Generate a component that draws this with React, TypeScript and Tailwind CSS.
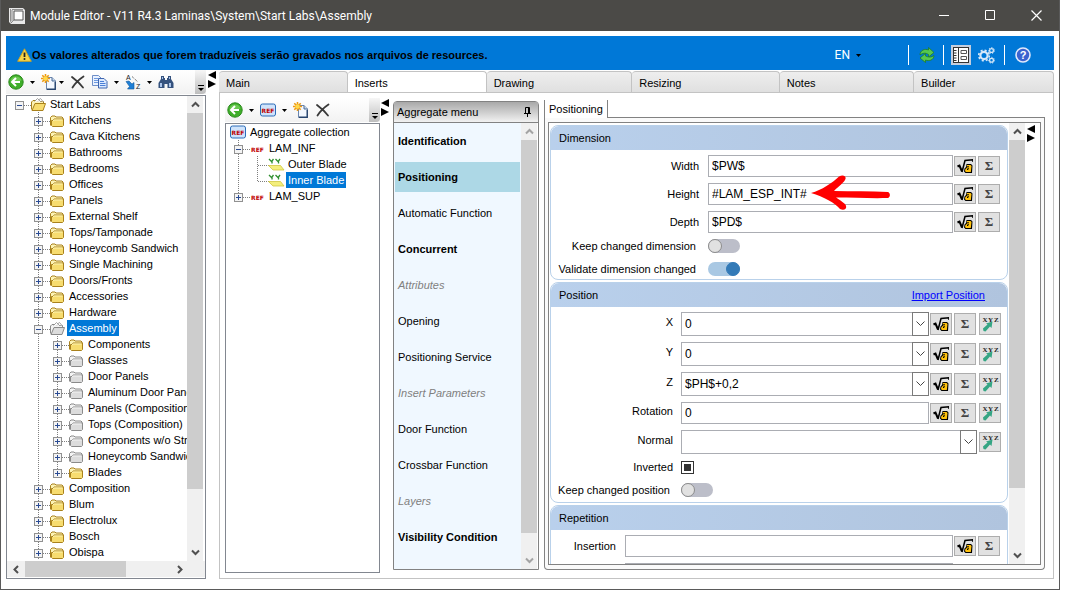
import { ReactNode, useState } from "react";
import { clsx } from "clsx";

type TreeRow = {
  label: string;
  icon: ReactNode;
  // vertical guides of the parent levels: true draws the dotted line
  guides?: boolean[];
  expander?: "open" | "closed" | "none";
  first?: boolean;
  last?: boolean;
  isRoot?: boolean;
};

function Caret({ className }: { className?: string }) {
  return (
    <svg className={clsx("h-[3px] w-[5px] shrink-0", className)} viewBox="0 0 5 3">
      <path d="M0 0h5L2.5 3z" fill="#000" />
    </svg>
  );
}

function BackIcon() {
  return (
    <svg className="size-4" viewBox="0 0 16 16">
      <circle cx="8" cy="8" r="7.2" fill="#3fae2a" stroke="#2b8a1c" />
      <path d="M2.5 6.5a5.8 5.8 0 0 1 11 0Q8 8.5 2.5 6.5z" fill="#7ed463" opacity=".7" />
      <path d="M8 4 4 8l4 4M4.5 8H12" fill="none" stroke="#fff" strokeWidth="2" />
    </svg>
  );
}

function NewIcon() {
  return (
    <svg className="size-4" viewBox="0 0 16 16">
      <path d="M5.5 3.5h5.5l3.5 3.5v8.5h-9z" fill="#f3f8ff" stroke="#6c86ad" />
      <path d="M11 3.5v3.5h3.5" fill="#c7d9ef" stroke="#4b6a94" />
      <path d="M14.2 8v7.3H6" fill="none" stroke="#27446e" strokeWidth="1.4" />
      <path d="M4.5 0v9M0 4.5h9M1.3 1.3l6.4 6.4M7.7 1.3 1.3 7.7" stroke="#ee9a12" strokeWidth="1.6" />
      <circle cx="4.5" cy="4.5" r="2.2" fill="#ffd94a" />
    </svg>
  );
}

function DeleteIcon() {
  return (
    <svg className="size-4" viewBox="0 0 16 16">
      <path d="M2 3c4 3 8 6.5 11 10.5M13.5 2.5C9 5.5 5 9.5 2.5 13.5" fill="none" stroke="#3a3a3a" strokeWidth="1.8" strokeLinecap="round" />
    </svg>
  );
}

function CopyIcon() {
  return (
    <svg className="size-4" viewBox="0 0 16 16">
      <path d="M.5 1.5h6l2.5 2.5v7.5H.5z" fill="#eaf2ff" stroke="#6f8fc8" />
      <path d="M2 4.5h4M2 6.5h5M2 8.5h5" stroke="#6f9ae0" />
      <path d="M6.5 4.5h5.5l3 3v6.500H6.5z" fill="#dbe9ff" stroke="#3f66b0" />
      <path d="M8 7.5h4M8 9.5h5.5M8 11.5h5.5" stroke="#4a7fd6" />
    </svg>
  );
}

function SortIcon() {
  return (
    <svg className="size-4" viewBox="0 0 16 16">
      <text x="1" y="6" fontSize="7" fontFamily="Liberation Sans, sans-serif" fill="#222">A</text>
      <text x="11" y="15" fontSize="7" fontFamily="Liberation Sans, sans-serif" fill="#222">Z</text>
      <path d="M7 2.5 13 8" stroke="#444" strokeDasharray="1 1" />
      <path d="M1 7.5l3-.5 3 3 2-1.5V15H2.5l2-2.5z" fill="#1e7fd6" stroke="#12599c" strokeWidth=".6" />
    </svg>
  );
}

function FindIcon() {
  return (
    <svg className="size-4" viewBox="0 0 16 16">
      <path d="M3 2h3v2h1v2h2V4h1V2h3v3l2.5 4v5h-6v-4h-3v4h-6V9L3 5z" fill="#35527e" />
      <path d="M4 3h1v2H4zM11 3h1v2h-1zM2 9h2v4H2zM11 9h2v4h-2z" fill="#a9c3ea" />
    </svg>
  );
}

function FolderIcon({ tone = "gold", open }: { tone?: "gold" | "gray"; open?: boolean }) {
  const stroke = tone === "gold" ? "#a9811c" : "#8a8a8a";
  const fill = tone === "gold" ? "#f7dc6f" : "#dcdcdc";
  const light = tone === "gold" ? "#fdf3b4" : "#f4f4f4";
  if (open) {
    return (
      <svg className="h-4 w-[15px] shrink-0" viewBox="0 0 15 16">
        <path d="M.5 13.5V6l1.5-1.5h3l1 1h6.5v3" fill={light} stroke={stroke} />
        <path d="M3.5 5.5 6.5 2.5 10 6M7.5 4l2-1.500L12.500 6" fill="#fff" stroke="#8d8d8d" strokeWidth=".8" />
        <path d="M1 14.500 4 7.500h10.500l-2.500 7z" fill={fill} stroke={stroke} />
      </svg>
    );
  }
  return (
    <svg className="h-4 w-[15px] shrink-0" viewBox="0 0 15 16">
      <path d="M.5 13.5V5.500l1.500-1.500h3l1 1h6l1 1v1.500" fill={light} stroke={stroke} />
      <path d="M2.500 14.500 1.500 13.500V8.500h1.500l1-1.500h9.500v6.500l-1 1z" fill={fill} stroke={stroke} />
      <path d="M3.500 9V8h9" fill="none" stroke={light} />
    </svg>
  );
}

function RefIcon({ boxed }: { boxed?: boolean }) {
  if (boxed) {
    return (
      <svg className="size-4 shrink-0" viewBox="0 0 16 16">
        <rect x=".5" y="2" width="15" height="12" rx="2" fill="#cfe3fb" stroke="#2c6cb8" />
        <text x="8" y="10.5" textAnchor="middle" fontSize="6" fontWeight="700" fontFamily="DejaVu Sans, sans-serif" fill="#c00000">REF</text>
      </svg>
    );
  }
  return (
    <svg className="h-4 w-[15px] shrink-0" viewBox="0 0 15 16">
      <text x="7.5" y="11.5" textAnchor="middle" fontSize="6" fontWeight="700" fontFamily="DejaVu Sans, sans-serif" fill="#c00000">REF</text>
    </svg>
  );
}

function BladeIcon() {
  return (
    <svg className="h-4 w-[15px] shrink-0 overflow-visible" viewBox="0 0 15 16">
      <path d="M-.5 9.500h12l3.500 4.500H4z" fill="#f3ee7c" stroke="#cfc640" strokeWidth=".8" />
      <path d="M0 3l3.500 3.500M4.500 3 3 5V7.500M6.500 3l3.500 3.500M11 3 9.500 5V7.500" fill="none" stroke="#2f8f2f" strokeWidth="1.300" />
    </svg>
  );
}

function Guide({ on }: { on: boolean }) {
  return (
    <svg className="h-4 w-[19px] shrink-0" viewBox="0 0 19 16">
      {on && <path d="M9.5 0v16" stroke="#7f7f7f" strokeDasharray="1 1" />}
    </svg>
  );
}

function Expander({ state, first, last }: { state: "open" | "closed" | "none"; first?: boolean; last?: boolean }) {
  return (
    <svg className="h-4 w-[21px] shrink-0" viewBox="0 0 21 16">
      <path
        d={clsx(first ? "M9.5 9" : "M9.5 0", last ? "V9" : "V16")}
        stroke="#7f7f7f"
        strokeDasharray="1 1"
      />
      <path d="M10 9.5h11" stroke="#7f7f7f" strokeDasharray="1 1" />
      {state !== "none" && (
        <>
          <rect x="5.5" y="5.5" width="8" height="8" fill="#f4f4f4" stroke="#919191" />
          <path d={state === "open" ? "M7 9.5h5" : "M7 9.5h5M9.5 7v5"} stroke="#2a4b94" />
        </>
      )}
    </svg>
  );
}

function Tree({ rows, initial, label }: { rows: TreeRow[]; initial: string; label: string }) {
  const [selected, setSelected] = useState(initial);

  return (
    <ul aria-label={label} className="min-w-0 flex-1 overflow-hidden pl-[3px]">
      {rows.map((row) => (
        <li key={row.label} className="flex h-4 items-center">
          {row.guides?.map((on, i) => <Guide key={i} on={on} />)}
          {row.isRoot && !row.expander ? (
            <span className="w-px shrink-0" />
          ) : (
            <Expander state={row.expander ?? "none"} first={row.first} last={row.last} />
          )}
          {row.icon}
          <button
            type="button"
            onClick={() => setSelected(row.label)}
            className={clsx(
              "ml-[2px] h-4 px-[2px] text-[11px] leading-4 whitespace-nowrap",
              selected === row.label && "bg-[#0078d7] text-white",
            )}
          >
            {row.label}
          </button>
        </li>
      ))}
    </ul>
  );
}

function Chevron({ dir, color = "#505050" }: { dir: "up" | "down" | "left" | "right"; color?: string }) {
  const paths = {
    up: "M1 6.5 4.5 3 8 6.5",
    down: "M1 2.5 4.5 6 8 2.5",
    left: "M6 1 2.5 4.5 6 8",
    right: "M3 1 6.5 4.5 3 8",
  };
  return (
    <svg className="size-[9px]" viewBox="0 0 9 9">
      <path d={paths[dir]} fill="none" stroke={color} strokeWidth="2" />
    </svg>
  );
}

function ScrollBar({ thumb, rest, color }: { thumb: string; rest: string; color?: string }) {
  return (
    <div className="flex w-4 shrink-0 flex-col bg-[#f0f0f0]">
      <button type="button" aria-label="Scroll up" className="flex h-[17px] items-center justify-center">
        <Chevron dir="up" color={color} />
      </button>
      <div className={clsx("basis-0 bg-[#cdcdcd]", thumb)} />
      <div className={clsx("basis-0", rest)} />
      <button type="button" aria-label="Scroll down" className="flex h-[17px] items-center justify-center">
        <Chevron dir="down" color={color} />
      </button>
    </div>
  );
}

function Splitter() {
  return (
    <svg className="h-[18px] w-[9px] shrink-0" viewBox="0 0 9 18">
      <path d="M8 0v8L0 4zM0 9v8l8-4z" fill="#000" />
    </svg>
  );
}

function ToolbarEnd() {
  return (
    <div className="ml-auto flex h-full w-[11px] items-end justify-center rounded-br bg-gradient-to-b from-[#f7f7f7] to-[#bdbdbd] pb-[2px]">
      <svg className="h-[7px] w-[6px]" viewBox="0 0 6 7">
        <path d="M0 .5h6" stroke="#000" />
        <path d="M0 3h6L3 6z" fill="#000" />
      </svg>
    </div>
  );
}

function ToolButton({ label, className, children }: { label: string; className?: string; children: ReactNode }) {
  return (
    <button type="button" aria-label={label} className={clsx("shrink-0", className)}>
      {children}
    </button>
  );
}

function FormulaButton({ className = "h-5" }: { className?: string }) {
  return (
    <button type="button" aria-label="Formula" className={clsx("flex w-[22px] shrink-0 items-center justify-center border border-[#adadad] bg-[#e1e1e1]", className)}>
      <svg className="size-4" viewBox="0 0 16 16">
        <path d="M5 14 8 2.500 16 1.800V4" fill="none" stroke="#000" strokeWidth="1.500" />
        <path d="M.5 8.500 2.500 7.500 5 13.500" fill="none" stroke="#000" strokeWidth="2" />
        <path d="M9.500 6H14l1.500 1.500-.5 7.500H8.500l-1.500-1.500.5-3 1.500-1.500z" fill="#000" />
        <path d="M9.800 7H13.500l1 1-.7 6H9l-1-1 .4-2L10 9.800z" fill="#ffc20e" />
        <path d="M10 8.800h2M10.500 12v-1.200h1.500" fill="none" stroke="#000" />
      </svg>
    </button>
  );
}

function SumButton({ className = "h-5" }: { className?: string }) {
  return (
    <button type="button" aria-label="Sum" className={clsx("flex w-[22px] shrink-0 items-center justify-center border border-[#adadad] bg-[#e1e1e1] font-['Liberation_Serif',serif] text-[13px] leading-4 font-bold text-[#444]", className)}>
      Σ
    </button>
  );
}

function XyzButton({ className = "h-5" }: { className?: string }) {
  return (
    <button type="button" aria-label="Pick coordinates" className={clsx("ml-px flex w-[22px] shrink-0 items-center justify-center border border-[#adadad] bg-[#e1e1e1]", className)}>
      <svg className="h-[18px] w-5" viewBox="0 0 20 18">
        <path d="M3 13.500 7.500 9.500 6 8.500l6.500-2-1 6.500-1.500-1.500-4.500 5-2-.5z" fill="#35a583" />
        <text x="2.500" y="7" fontSize="7" fontWeight="700" fontFamily="Liberation Serif, serif" fill="#222">X</text>
        <text x="8" y="7" fontSize="7" fontWeight="700" fontFamily="Liberation Serif, serif" fill="#222">Y</text>
        <text x="14" y="7" fontSize="7" fontWeight="700" fontFamily="Liberation Serif, serif" fill="#222">Z</text>
      </svg>
    </button>
  );
}

function Group({ title, action, className, children }: { title: string; action?: ReactNode; className?: string; children: ReactNode }) {
  return (
    <section className={clsx("shrink-0 rounded-lg border border-[#b9d1ea]", className)}>
      <header className="flex h-6 items-center justify-between rounded-t-lg bg-gradient-to-r from-[#b9d0ec] to-[#b0c4de] pr-[22px] pl-2">
        <h2>{title}</h2>
        {action}
      </header>
      {children}
    </section>
  );
}

const inputStyle = "h-[22px] w-full min-w-0 border border-[#abadb3] bg-white px-[3px] text-[12px] leading-4 outline-none";

function DimensionRow({ id, label, value, children }: { id: string; label: string; value: string; children?: ReactNode }) {
  return (
    <div className="flex h-[22px] items-center">
      <label htmlFor={id} className="mr-[9px] w-[148px] shrink-0 text-right">{label}</label>
      <div className="relative min-w-0 flex-1">
        <input id={id} defaultValue={value} className={inputStyle} />
        {children}
      </div>
      <div className="ml-px flex gap-[2px]">
        <FormulaButton />
        <SumButton />
      </div>
    </div>
  );
}

function Combo({ id, value }: { id: string; value: string }) {
  return (
    <div className="flex h-6 min-w-0 flex-1">
      <select id={id} defaultValue={value} className="h-6 min-w-0 flex-1 appearance-none border border-[#abadb3] bg-white px-[3px] text-[12px] leading-4 outline-none">
        <option value={value}>{value}</option>
      </select>
      <span className="pointer-events-none -ml-px flex w-[17px] shrink-0 items-center justify-center border border-[#7a7a7a] bg-white">
        <svg className="h-[6px] w-[9px]" viewBox="0 0 9 6">
          <path d="M.5.5 4.5 4.5 8.5.5" fill="none" stroke="#444" />
        </svg>
      </span>
    </div>
  );
}

function PositionRow({ id, label, value }: { id: string; label: string; value: string }) {
  return (
    <div className="flex h-6 items-center">
      <label htmlFor={id} className="mr-2 mb-1 w-[122px] shrink-0 text-right">{label}</label>
      <Combo id={id} value={value} />
      <div className="ml-px flex gap-[2px]">
        <FormulaButton className="h-[22px]" />
        <SumButton className="h-[22px]" />
        <XyzButton className="h-[22px]" />
      </div>
    </div>
  );
}

function Toggle({ id, checked }: { id: string; checked?: boolean }) {
  return (
    <input
      id={id}
      type="checkbox"
      role="switch"
      defaultChecked={checked}
      className="flex h-[14px] w-8 shrink-0 appearance-none rounded-full bg-[#bcbec9] before:size-[14px] before:rounded-full before:border before:border-[#8c8c8c] before:bg-[#e1e1e1] checked:justify-end checked:bg-[#a9c8e3] checked:before:border-[#337ab7] checked:before:bg-[#337ab7]"
    />
  );
}

const libraryRows: TreeRow[] = [
  { label: "Start Labs", icon: <FolderIcon open />, expander: "open", first: true, last: true, isRoot: true },
  ...[
    "Kitchens",
    "Cava Kitchens",
    "Bathrooms",
    "Bedrooms",
    "Offices",
    "Panels",
    "External Shelf",
    "Tops/Tamponade",
    "Honeycomb Sandwich",
    "Single Machining",
    "Doors/Fronts",
    "Accessories",
    "Hardware",
  ].map((label): TreeRow => ({ label, icon: <FolderIcon />, guides: [false], expander: "closed" })),
  { label: "Assembly", icon: <FolderIcon tone="gray" open />, guides: [false], expander: "open" },
  { label: "Components", icon: <FolderIcon />, guides: [false, true], expander: "closed" },
  ...[
    "Glasses",
    "Door Panels",
    "Aluminum Door Panels",
    "Panels (Composition)",
    "Tops (Composition)",
    "Components w/o Structure",
    "Honeycomb Sandwich Panels",
  ].map((label): TreeRow => ({ label, icon: <FolderIcon tone="gray" />, guides: [false, true], expander: "closed" })),
  { label: "Blades", icon: <FolderIcon />, guides: [false, true], expander: "closed", last: true },
  ...["Composition", "Blum", "Electrolux", "Bosch", "Obispa"].map(
    (label): TreeRow => ({ label, icon: <FolderIcon />, guides: [false], expander: "closed" }),
  ),
];

const aggregateRows: TreeRow[] = [
  { label: "Aggregate collection", icon: <RefIcon boxed />, isRoot: true },
  { label: "LAM_INF", icon: <RefIcon />, expander: "open" },
  { label: "Outer Blade", icon: <BladeIcon />, guides: [true] },
  { label: "Inner Blade", icon: <BladeIcon />, guides: [true], last: true },
  { label: "LAM_SUP", icon: <RefIcon />, expander: "closed", last: true },
];

const menuItems = [
  { label: "Identification", style: "font-bold" },
  { label: "Positioning", style: "font-bold bg-[#add8e6]" },
  { label: "Automatic Function", style: "" },
  { label: "Concurrent", style: "font-bold" },
  { label: "Attributes", style: "italic text-[#808080]" },
  { label: "Opening", style: "" },
  { label: "Positioning Service", style: "" },
  { label: "Insert Parameters", style: "italic text-[#808080]" },
  { label: "Door Function", style: "" },
  { label: "Crossbar Function", style: "" },
  { label: "Layers", style: "italic text-[#808080]" },
  { label: "Visibility Condition", style: "font-bold" },
  { label: "Type", style: "font-bold" },
];

const tabs = [
  { label: "Main", width: "grow-[128]" },
  { label: "Inserts", width: "grow-[139]" },
  { label: "Drawing", width: "grow-[146]" },
  { label: "Resizing", width: "grow-[148]" },
  { label: "Notes", width: "grow-[134]" },
  { label: "Builder", width: "grow-[140]" },
];

function TitleBar() {
  return (
    <header className="flex h-[31px] shrink-0 items-center bg-[#4b4a47] pr-[17px] pl-2 text-white">
      <svg className="size-4" viewBox="0 0 16 16">
        <path d="M0 0h14l2 2v14H2l-2-2z" fill="#e8e8e8" />
        <path d="M5 3h9v9H5z" fill="#fff" stroke="#555" />
        <path d="M1.500 1v12l1 2M5 12l-3 3M3 1.500h11M3 2v11" fill="none" stroke="#777" strokeWidth=".8" />
      </svg>
      <h1 className="ml-[5px] flex-1 truncate font-[Roboto,sans-serif] text-[12px] leading-4">
        Module Editor - V11 R4.3 Laminas\System\Start Labs\Assembly
      </h1>
      <div className="flex items-center gap-[35px]">
        <button type="button" aria-label="Minimize">
          <svg className="size-[11px]" viewBox="0 0 11 11"><path d="M0 5.5h10" stroke="#fff" /></svg>
        </button>
        <button type="button" aria-label="Maximize">
          <svg className="size-[11px]" viewBox="0 0 11 11"><path d="M.5.5h9v9h-9z" fill="none" stroke="#fff" /></svg>
        </button>
        <button type="button" aria-label="Close">
          <svg className="size-[11px]" viewBox="0 0 11 11"><path d="M.5.5l10 10M10.5.5l-10 10" stroke="#fff" strokeWidth="1.2" /></svg>
        </button>
      </div>
    </header>
  );
}

function Banner() {
  return (
    <div className="flex h-[34px] shrink-0 items-center bg-[#0078d7] pt-1 pr-[23px] pl-[11px]">
      <svg className="h-[14px] w-[15px] shrink-0" viewBox="0 0 15 14">
        <path d="M7.5.8 14.3 13.3H.7z" fill="#f7d64a" stroke="#c9a227" strokeLinejoin="round" />
        <path d="M7.5 4.5v4.5" stroke="#222" strokeWidth="1.8" />
        <circle cx="7.5" cy="11" r="1" fill="#222" />
      </svg>
      <p className="flex-1 truncate leading-4 font-bold">
        Os valores alterados que forem traduzíveis serão gravados nos arquivos de resources.
      </p>
      <button type="button" className="mr-[47px] flex items-center gap-[6px] font-[Roboto,sans-serif] text-[12px] leading-4 text-white">
        EN <Caret />
      </button>
      <span className="mr-[10px] h-5 w-px bg-white" />
      <ToolButton label="Refresh" className="mr-2">
        <svg className="size-4" viewBox="0 0 16 16">
          <path d="M1 8C1 3 6 1.500 9.500 3V.5l5.500 5-5.500 4.500V7.500C6.500 5.500 3.500 6 1 8z" fill="#57c84d" stroke="#1d7a1d" strokeWidth=".7" />
          <path d="M15 8.500c0 4.500-5 6-8.500 4.500v2.500L1 11l5.500-4.500V9C9.500 10.500 12.500 10.500 15 8.500z" fill="#57c84d" stroke="#1d7a1d" strokeWidth=".7" />
        </svg>
      </ToolButton>
      <span className="mr-[7px] h-5 w-px bg-white" />
      <ToolButton label="Layout" className="mr-[7px] bg-[#c5cede] p-[2px]">
        <svg className="size-4" viewBox="0 0 16 16">
          <rect x=".5" y=".5" width="15" height="15" fill="#fff" stroke="#333" />
          <path d="M5.5 0v16M1 3.5h2.5M1 6h2.5M1 8.5h2.5M1 11h2.5M1 13.5h2.5" stroke="#333" />
          <path d="M8 3.5h5.5v3H8zM8 9.5h5.5v3H8z" fill="#fff" stroke="#555" />
        </svg>
      </ToolButton>
      <ToolButton label="Settings" className="mr-[9px]">
        <svg className="size-[17px]" viewBox="0 0 17 17">
          <circle cx="6" cy="8.5" r="3.6" fill="none" stroke="#d7e8f8" strokeWidth="2.2" />
          <circle cx="6" cy="8.5" r="5.3" fill="none" stroke="#d7e8f8" strokeWidth="1.6" strokeDasharray="2.1 2.06" />
          <circle cx="13.5" cy="3.5" r="1.9" fill="none" stroke="#d7e8f8" strokeWidth="1.3" />
          <circle cx="13.5" cy="3.5" r="2.9" fill="none" stroke="#d7e8f8" strokeDasharray="1.3 1.3" />
          <circle cx="13.5" cy="13.2" r="1.9" fill="none" stroke="#d7e8f8" strokeWidth="1.3" />
          <circle cx="13.5" cy="13.2" r="2.9" fill="none" stroke="#d7e8f8" strokeDasharray="1.3 1.3" />
        </svg>
      </ToolButton>
      <span className="mr-[10px] h-5 w-px bg-white" />
      <ToolButton label="Help">
        <svg className="size-4" viewBox="0 0 16 16">
          <circle cx="8" cy="8" r="7" fill="#3b63cf" stroke="#dfe8fb" strokeWidth="1.6" />
          <text x="8" y="12" textAnchor="middle" fontSize="11" fontWeight="700" fontFamily="Liberation Sans, sans-serif" fill="#fff">?</text>
        </svg>
      </ToolButton>
    </div>
  );
}

function LibraryPanel() {
  return (
    <aside className="flex w-[200px] shrink-0 flex-col">
      <div className="flex h-6 shrink-0 items-center bg-gradient-to-b from-white to-[#f2f2f2] pl-[2px]">
        <ToolButton label="Back"><BackIcon /></ToolButton>
        <Caret className="mx-[6px]" />
        <ToolButton label="New"><NewIcon /></ToolButton>
        <Caret className="mx-[2px]" />
        <ToolButton label="Delete" className="ml-1"><DeleteIcon /></ToolButton>
        <ToolButton label="Copy" className="ml-[6px]"><CopyIcon /></ToolButton>
        <Caret className="mx-[6px]" />
        <ToolButton label="Sort"><SortIcon /></ToolButton>
        <Caret className="mx-[6px]" />
        <ToolButton label="Find"><FindIcon /></ToolButton>
        <ToolbarEnd />
      </div>
      <div className="mt-px flex min-h-0 flex-1 flex-col border border-[#828790]">
        <div className="flex min-h-0 flex-1">
          <Tree label="Library" rows={libraryRows} initial="Assembly" />
          <div className="mr-[2px] flex">
            <ScrollBar thumb="grow-[375]" rest="grow-[55]" />
          </div>
        </div>
        <div className="mb-px flex h-4 shrink-0 items-center bg-[#f0f0f0] pr-[17px]">
          <button type="button" aria-label="Scroll left" className="flex w-[18px] justify-center"><Chevron dir="left" /></button>
          <div className="h-full grow-[101] bg-[#cdcdcd]" />
          <div className="grow-[44]" />
          <button type="button" aria-label="Scroll right" className="flex w-[18px] justify-center"><Chevron dir="right" /></button>
        </div>
      </div>
    </aside>
  );
}

function AggregatePanel() {
  return (
    <div className="flex w-[155px] shrink-0 flex-col">
      <div className="flex h-6 shrink-0 items-center bg-gradient-to-b from-white to-[#f2f2f2] pl-[2px]">
        <ToolButton label="Back"><BackIcon /></ToolButton>
        <Caret className="mx-[6px]" />
        <ToolButton label="Reference"><RefIcon boxed /></ToolButton>
        <Caret className="mx-[6px]" />
        <ToolButton label="New"><NewIcon /></ToolButton>
        <ToolButton label="Delete" className="ml-[6px]"><DeleteIcon /></ToolButton>
        <ToolbarEnd />
      </div>
      <div className="mt-px flex min-h-0 flex-1 border border-[#828790]">
        <Tree label="Aggregates" rows={aggregateRows} initial="Inner Blade" />
      </div>
    </div>
  );
}

function AggregateMenu() {
  return (
    <nav className="mt-[3px] mb-[3px] flex w-[146px] shrink-0 flex-col rounded-t border border-[#828282]">
      <header className="flex h-[21px] shrink-0 items-center justify-between border-b border-[#828282] bg-gradient-to-b from-[#a9a9a9] to-[#f2f2f2] pr-[7px] pl-[3px]">
        <h2>Aggregate menu</h2>
        <button type="button" aria-label="Pin">
          <svg className="h-[10px] w-[7px]" viewBox="0 0 7 10">
            <path d="M1.5 6V.5h4V6M0 6.5h7M3.5 6.5V10M4.5 1v5" fill="none" stroke="#000" />
          </svg>
        </button>
      </header>
      <div className="flex min-h-0 flex-1 pr-px">
        <ul className="flex min-w-0 flex-1 flex-col gap-[6px] overflow-hidden bg-[#f0f8ff] px-px pt-[3px]">
          {menuItems.map((item) => (
            <li key={item.label} className="shrink-0">
              <button type="button" className={clsx("h-[30px] w-full pl-[3px] text-left whitespace-nowrap", item.style)}>
                {item.label}
              </button>
            </li>
          ))}
        </ul>
        <ScrollBar thumb="grow-[393]" rest="grow-[19]" color="#a3a3a3" />
      </div>
    </nav>
  );
}

function PositioningForm() {
  return (
    <form className="flex min-w-0 flex-1 flex-col gap-[2px] overflow-hidden px-px pt-[2px]">
      <Group title="Dimension" className="pb-[2px]">
        <div className="flex flex-col gap-[6px] pt-[5px] pr-[7px]">
          <DimensionRow id="width" label="Width" value="$PW$" />
          <DimensionRow id="height" label="Height" value="#LAM_ESP_INT#">
            <svg className="pointer-events-none absolute -top-2 left-[102px] h-9 w-20" viewBox="0 0 80 36">
              <path
                d="M1 18C12 15 22 8 29 1.500 34-1 38 2 34 6.500 30 11 26 13.500 24 16c18 .5 36 0 54 1 2.500 1 2.500 5 0 6-18 .5-34-.5-52-.500 3 2 6 4 9 6.500 3 4 0 7-5 5C25 28 14 22 1 18z"
                fill="#ff0000"
              />
            </svg>
          </DimensionRow>
          <DimensionRow id="depth" label="Depth" value="$PD$" />
        </div>
        <div className="mt-[5px] flex flex-col gap-[7px]">
          <div className="flex h-4 items-center">
            <label htmlFor="keep-dimension" className="mr-3 w-[145px] shrink-0 text-right">Keep changed dimension</label>
            <Toggle id="keep-dimension" />
          </div>
          <div className="flex h-4 items-center">
            <label htmlFor="validate-dimension" className="mr-3 w-[145px] shrink-0 text-right whitespace-nowrap">Validate dimension changed</label>
            <Toggle id="validate-dimension" checked />
          </div>
        </div>
      </Group>

      <Group
        title="Position"
        className="pb-1"
        action={<a href="#import" className="text-[#0000ff] underline">Import Position</a>}
      >
        <div className="flex flex-col gap-[6px] pt-[5px] pr-[6px]">
          <PositionRow id="x" label="X" value="0" />
          <PositionRow id="y" label="Y" value="0" />
          <PositionRow id="z" label="Z" value="$PH$+0,2" />
          <div className="flex h-[22px] items-center">
            <label htmlFor="rotation" className="mr-2 mb-1 w-[122px] shrink-0 text-right">Rotation</label>
            <input id="rotation" defaultValue="0" className={clsx(inputStyle, "flex-1")} />
            <div className="ml-px flex gap-[2px]">
              <FormulaButton />
              <SumButton />
              <XyzButton />
            </div>
          </div>
          <div className="flex h-6 items-center">
            <label htmlFor="normal" className="mr-2 mb-1 w-[122px] shrink-0 text-right">Normal</label>
            <Combo id="normal" value="" />
            <div className="ml-px">
              <XyzButton />
            </div>
          </div>
        </div>
        <div className="mt-[5px] flex flex-col gap-[7px]">
          <div className="flex h-4 items-center">
            <label htmlFor="inverted" className="mr-2 w-[122px] shrink-0 text-right">Inverted</label>
            <input
              id="inverted"
              type="checkbox"
              defaultChecked
              className="flex size-[13px] appearance-none items-center justify-center border border-[#333] bg-white checked:before:size-[7px] checked:before:bg-[#333]"
            />
          </div>
          <div className="flex h-4 items-center">
            <label htmlFor="keep-position" className="mr-[11px] w-[119px] shrink-0 text-right whitespace-nowrap">Keep changed position</label>
            <Toggle id="keep-position" />
          </div>
        </div>
      </Group>

      <Group title="Repetition">
        <div className="flex flex-col gap-[6px] pt-[5px] pr-[7px]">
          <div className="flex h-[22px] items-center">
            <label htmlFor="insertion" className="mr-[9px] w-[65px] shrink-0 text-right">Insertion</label>
            <input id="insertion" className={clsx(inputStyle, "flex-1")} />
            <div className="ml-px flex gap-[2px]">
              <FormulaButton />
              <SumButton />
            </div>
          </div>
          <div className="flex h-[22px] items-center pr-[47px] pl-[74px]">
            <input aria-label="Quantity" className={inputStyle} />
          </div>
        </div>
      </Group>
    </form>
  );
}

function PositioningPanel() {
  return (
    <div className="mt-[2px] mr-[3px] mb-[3px] ml-[5px] flex min-w-0 flex-1 flex-col">
      <div role="tablist" className="flex h-[18px] shrink-0">
        <button type="button" role="tab" aria-selected className="border-x border-[#828282] px-1 leading-4">
          Positioning
        </button>
        <span className="flex-1 border-b border-[#828282]" />
      </div>
      <div className="flex min-h-0 flex-1 rounded-b border border-t-0 border-[#828282] bg-[#fafafa] px-[3px] pt-1 pb-1">
        <div className="flex min-w-0 flex-1 border border-[#828282] bg-white">
          <PositioningForm />
          <ScrollBar thumb="grow-[346]" rest="grow-[59]" />
          <div className="w-[15px] shrink-0 pt-[2px] pl-[2px]">
            <Splitter />
          </div>
        </div>
      </div>
    </div>
  );
}

export default function App() {
  const [tab, setTab] = useState("Inserts");

  return (
    <div className="h-screen bg-white pr-[7px] pb-4 font-['Liberation_Sans',Arial,sans-serif] text-[11px] leading-4 text-black">
      <div className="flex h-full flex-col border border-t-0 border-[#5a5a5a]">
        <TitleBar />
        <div className="flex min-h-0 flex-1 flex-col px-[5px] pt-[5px] pb-[10px]">
          <Banner />
          <main className="flex min-h-0 flex-1">
            <LibraryPanel />
            <div className="mt-px ml-[2px]">
              <Splitter />
            </div>
            <div className="ml-[2px] flex min-w-0 flex-1 flex-col">
              <div role="tablist" className="mt-px flex h-[21px] shrink-0">
                {tabs.map((item) => (
                  <button
                    key={item.label}
                    type="button"
                    role="tab"
                    aria-selected={item.label === tab}
                    onClick={() => setTab(item.label)}
                    className={clsx(
                      "basis-0 rounded-t-sm border-t border-r border-[#c3c3c3] pt-[2px] pl-[7px] text-left",
                      item.width,
                      item.label === tab ? "bg-white" : "bg-gradient-to-b from-[#eeeeee] to-[#e0e0e0]",
                    )}
                  >
                    {item.label}
                  </button>
                ))}
              </div>
              <div className="flex min-h-0 flex-1 border border-[#c3c3c3] p-[5px]">
                <AggregatePanel />
                <div className="ml-px mt-px w-3 shrink-0">
                  <Splitter />
                </div>
                <AggregateMenu />
                <PositioningPanel />
              </div>
            </div>
          </main>
        </div>
      </div>
    </div>
  );
}
